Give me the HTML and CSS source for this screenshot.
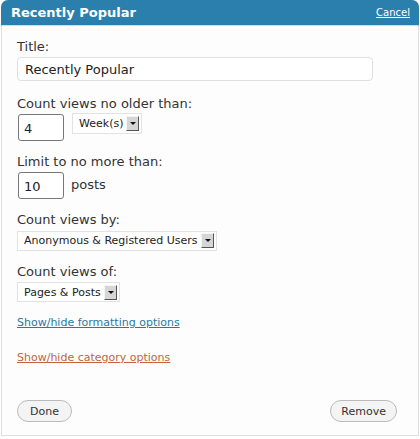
FILE: index.html
```html
<!DOCTYPE html>
<html lang="en">
<head>
    <meta charset="UTF-8">
    <title>Recently Popular</title>
    <link rel="stylesheet" href="styles.css">
</head>
<body>
    <div class="widget">
        <div class="widget-top">
            <h3>Recently Popular</h3>
            <a href="#" class="cancel">Cancel</a>
        </div>

        <div class="widget-inside">
            <div class="field first">
                <label>Title:</label>
                <div class="text-input wide">Recently Popular</div>
            </div>

            <div class="field">
                <label>Count views no older than:</label>
                <div class="row">
                    <div class="text-input small">4</div>
                    <div class="select">Week(s) <span class="arrow"></span></div>
                </div>
            </div>

            <div class="field">
                <label>Limit to no more than:</label>
                <div class="row">
                    <div class="text-input small">10</div>
                    <span class="after">posts</span>
                </div>
            </div>

            <div class="field">
                <label class="tight">Count views by:</label>
                <div class="select">Anonymous &amp; Registered Users <span class="arrow"></span></div>
            </div>

            <div class="field">
                <label class="tight">Count views of:</label>
                <div class="select">Pages &amp; Posts <span class="arrow"></span></div>
            </div>

            <p class="toggle"><a href="#" class="blue">Show/hide formatting options</a></p>
            <p class="toggle"><a href="#" class="orange">Show/hide category options</a></p>

            <div class="controls">
                <button class="done">Done</button>
                <button class="remove">Remove</button>
            </div>
        </div>
    </div>
</body>
</html>
```

FILE: styles.css
```css
body {
    margin: 0;
    background-color: #fff;
    font-family: "DejaVu Sans", Verdana, sans-serif;
    color: #333;
}
.widget {
    width: 418px;
    margin-left: 1px;
    height: 436px;
    border: 1px solid #dfdfdf;
    border-top: none;
    border-radius: 7px 7px 0 0;
    box-sizing: border-box;
    background-color: #fdfdfd;
}
.widget-top {
    display: flex;
    justify-content: space-between;
    align-items: center;
    height: 25px;
    margin: 0 -1px;
    padding: 0 9px 0 10px;
    background-color: #2a7fac;
    border-radius: 7px 7px 0 0;
    box-shadow: 0 1px 1px rgba(0, 0, 0, 0.15);
}
.widget-top h3 {
    margin: 0;
    color: #fff;
    font-size: 13px;
    font-weight: bold;
}
.cancel {
    color: #fff;
    font-size: 10px;
}
.widget-inside {
    padding: 14px 16px 0 14px;
}
.field {
    margin-bottom: 13px;
}
.field.first {
    margin-bottom: 15px;
}
label {
    display: block;
    font-size: 13px;
    margin-bottom: 3px;
    margin-left: 1px;
}
label.tight {
    margin-bottom: 2px;
}
.text-input {
    box-sizing: border-box;
    background-color: #fff;
    font-size: 13px;
    color: #222;
}
.wide {
    width: 356px;
    height: 24px;
    margin-left: 1px;
    margin-top: 3px;
    padding: 4px 7px;
    border: 1px solid #dfdfdf;
    border-radius: 4px;
}
.row {
    display: flex;
    align-items: flex-start;
    gap: 7px;
}
.small {
    width: 46px;
    height: 27px;
    margin-left: 2px;
    padding: 6px 5px;
    border: 1px solid #777;
    border-radius: 3px;
}
.after {
    font-size: 13px;
    margin-top: 5px;
}
.select {
    display: inline-flex;
    align-items: center;
    gap: 3px;
    height: 20px;
    padding: 0 2px 0 6px;
    box-sizing: border-box;
    border: 1px solid #e2e2e2;
    background-color: #fff;
    font-size: 11px;
    color: #222;
    margin-left: 1px;
}
.row .select {
    margin-top: -1px;
    height: 21px;
}
.arrow {
    position: relative;
    width: 11px;
    height: 13px;
    background-color: #d6d6d6;
    border-right: 1px solid #555;
    border-bottom: 1px solid #555;
    border-top: 1px solid #f4f4f4;
    border-left: 1px solid #f4f4f4;
}
.arrow::after {
    content: "";
    position: absolute;
    left: 3px;
    top: 5px;
    border-left: 3px solid transparent;
    border-right: 3px solid transparent;
    border-top: 3px solid #111;
}
.toggle {
    margin: 0 0 22px 1px;
    font-size: 11px;
}
.toggle:first-of-type {
    margin-top: 14px;
}
.blue {
    color: #2b7a9a;
}
.orange {
    color: #c5643a;
}
.controls {
    display: flex;
    justify-content: space-between;
    margin-top: 36px;
    padding-right: 5px;
    padding-left: 1px;
}
button {
    font-family: "DejaVu Sans", Verdana, sans-serif;
    font-size: 11px;
    color: #333;
    background-color: #f4f4f4;
    border: 1px solid #bbb;
    border-radius: 11px;
    height: 22px;
    padding: 0 10px;
}
button.done {
    padding: 0 12px;
}
```
